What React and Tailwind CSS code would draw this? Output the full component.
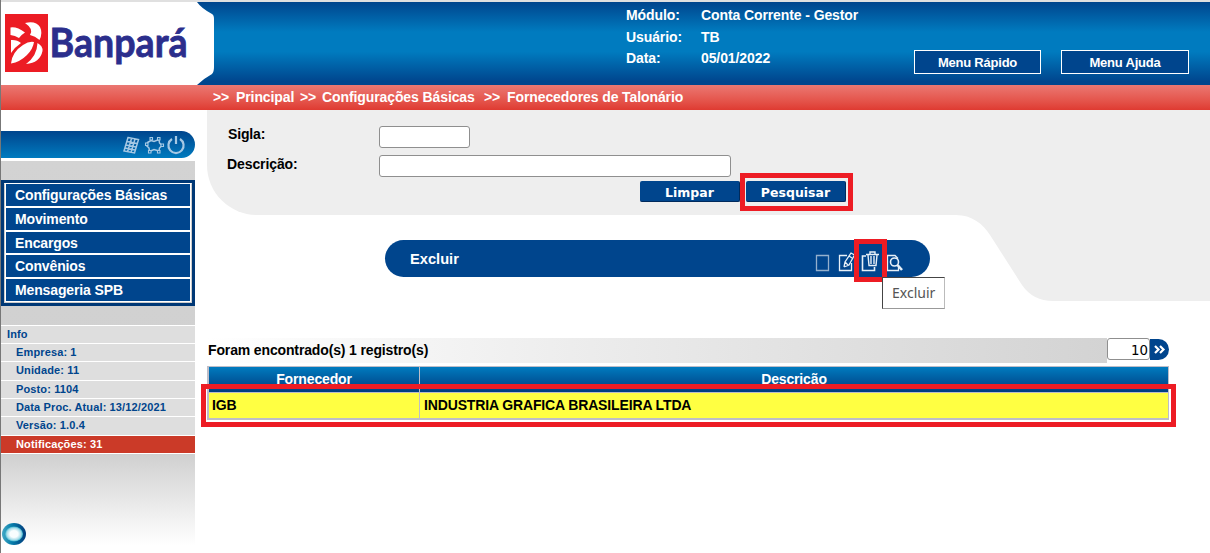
import React from "react";

function Logo() {
  return (
    <svg className="block h-[83px] w-[214px] shrink-0 overflow-visible" viewBox="0 0 214 83">
      <path d="M0 0H196Q200 6 211 12Q213 13 213 17V65Q213 70 211 72Q202 77 196 83H0Z" fill="#fff" />
      <rect x="4" y="12" width="43" height="58" fill="#ec1c24" />
      <path d="M9.500 25.500Q16 24.500 24 30.500Q20 33 18 36Q14 33.500 9.500 33Z" fill="#fff" />
      <path d="M24 21Q35 18.500 39 25Q42 31 38.500 38Q34 34 29 33Q33 27 24 21Z" fill="#fff" />
      <path d="M10 38Q16 37.500 20 41Q14 45 10 51Z" fill="#fff" />
      <path d="M10 61.500Q11 50 22 43Q28 39 33 40Q32 47 26 53Q19 60 10 61.500Z" fill="#fff" />
      <path d="M25 62Q36 54 36.500 41Q42 44 41.500 49Q39 61 25 62Z" fill="#fff" />
      <text x="48.500" y="54.500" fontFamily="Lato, sans-serif" fontWeight="700" fontSize="40" fill="#2b2e8c" stroke="#2b2e8c" strokeWidth=".8" textLength="138" lengthAdjust="spacingAndGlyphs">
        Banpará
      </text>
    </svg>
  );
}

function Header() {
  const rows = [
    ["Módulo:", "Conta Corrente - Gestor"],
    ["Usuário:", "TB"],
    ["Data:", "05/01/2022"],
  ];
  return (
    <header className="flex h-[85px] border-t-2 border-[#e0e0e0] bg-[linear-gradient(#00458d,#007bbf_36%,#007bbf_60%,#00458d_96%)] text-white">
      <Logo />
      <div className="ml-[411px] flex w-[288px] flex-col pt-[3px] text-[14px] leading-[21.5px] tracking-[-0.1px]">
        {rows.map(([k, v]) => (
          <div key={k} className="flex">
            <span className="w-[75px]">{k}</span>
            <span className="whitespace-nowrap">{v}</span>
          </div>
        ))}
      </div>
      <div className="flex gap-5 pt-12">
        <button className="h-6 w-[127px] border border-white bg-[#00458d] text-[13px] leading-[21px] tracking-[-0.22px]">Menu Rápido</button>
        <button className="h-6 w-32 border border-white bg-[#00458d] text-[13px] leading-[21px] tracking-[-0.22px]">Menu Ajuda</button>
      </div>
    </header>
  );
}

function Sidebar() {
  const menu = ["Configurações Básicas", "Movimento", "Encargos", "Convênios", "Mensageria SPB"];
  const info = ["Empresa: 1", "Unidade: 11", "Posto: 1104", "Data Proc. Atual: 13/12/2021", "Versão: 1.0.4"];
  return (
    <aside className="w-[194px] shrink-0 pt-[21px]">
      <div className="mb-[3px] flex h-[27px] justify-end rounded-r-full bg-linear-to-b from-[#00458d] to-[#007bbf]">
        <svg className="h-[27px] w-[72px]" viewBox="0 0 72 27" fill="none" stroke="#a5c8e4">
          <path d="M5 6.500L15.500 8.500L11.500 22L1 20ZM8.500 7.500L4.500 21M12 8L8 21.500M4 10.500L14 12.500M3 14L13 16M2 17L12 19" strokeWidth="1.500" />
          <path d="M24.500 11.500L28 9.500L31 10.500L36 8.500L36.500 12L39 14.500L36.500 17L36 20L31 18.500L26.500 20.500L26 17L23.500 14.500Z" strokeWidth="1.500" />
          <path d="M27 6.500h2.500v2.500h-2.500zM34.500 6.500h2.500v2.500h-2.500zM38 13h2.500v2.500h-2.500zM34.500 19.500h2.500v2.500h-2.500zM25.500 19.500h2.500v2.500h-2.500zM22.500 12h2.500v2.500h-2.500z" fill="#0067ae" strokeWidth="1.100" />
          <path d="M49 8A7.600 7.600 0 1 0 57 8M53 5V13" strokeWidth="2.200" />
        </svg>
      </div>
      <div className="h-[384px] bg-[linear-gradient(#d3d3d3,#cfcfcf_76%,#fff)] pt-[19px]">
        <nav className="h-[126px] bg-[#003876] px-[3px] pt-[3px]">
          <div className="flex h-[120px] flex-col gap-[2px] border border-r-[#ccc] border-b-[#ccc] border-t-white border-l-[#ccc] bg-white px-px pb-px text-[14px] leading-[22px] text-white">
            {menu.map((m) => (
              <div key={m} className="min-h-0 flex-1 bg-[#00458d] pl-[9px] tracking-[-0.13px]">{m}</div>
            ))}
          </div>
        </nav>
        <div className="mt-[19px] flex h-[129px] flex-col gap-px bg-white py-px text-[11px] leading-[16.5px] tracking-[0.13px] text-[#00458d]">
          <div className="h-[17px] shrink-0 bg-[#dedede] pl-[6px] leading-[17px]">Info</div>
          {info.map((t) => (
            <div key={t} className="min-h-0 flex-1 bg-[#dedede] pl-[15px]">{t}</div>
          ))}
          <div className="min-h-0 flex-1 bg-[#cb3a28] pl-[15px] text-white">Notificações: 31</div>
        </div>
        <svg className="mt-[68px] block h-6 w-[26px]" viewBox="0 0 26 24">
          <defs>
            <linearGradient id="ring" x1="0" x2="1"><stop stopColor="#43a9c6" /><stop offset=".4" stopColor="#087eab" /><stop offset="1" stopColor="#003b7b" /></linearGradient>
            <radialGradient id="glow"><stop offset=".45" stopColor="#f8fdfe" /><stop offset=".8" stopColor="#a5dce9" /><stop offset="1" stopColor="#38b2cb" /></radialGradient>
          </defs>
          <ellipse cx="13" cy="12" rx="12" ry="11" fill="url(#ring)" />
          <ellipse cx="13" cy="12" rx="9" ry="7.500" fill="url(#glow)" />
        </svg>
      </div>
    </aside>
  );
}

function SearchForm() {
  return (
    <section className="h-[105px] rounded-bl-[50px] bg-[#eee] text-[14px]">
      <div className="flex h-[45px] pt-4 pl-[21px]">
        <label className="w-[151px] leading-[16px] tracking-[-0.15px]">Sigla:</label>
        <input className="h-[22px] w-[91px] rounded-[3px] border border-[#8f8f8f] bg-white" />
      </div>
      <div className="flex h-[26px] pl-[20px]">
        <label className="w-[152px] leading-[18px] tracking-[-0.1px]">Descrição:</label>
        <input className="h-[22px] w-[352px] rounded-[3px] border border-[#8f8f8f] bg-white" />
      </div>
      <div className="flex gap-[6px] pl-[433px] font-['DejaVu_Sans',sans-serif] text-[12.5px] text-white">
        <button className="h-[21px] w-[100px] rounded-[2px] border-r border-b border-[#002a5c] bg-[#00458d] pt-px leading-[22px]">Limpar</button>
        <div className="relative">
          <button className="block h-[21px] w-[100px] rounded-[2px] border-r border-b border-[#002a5c] bg-[#00458d] pt-px leading-[22px]">Pesquisar</button>
          <div className="absolute -top-2 -left-[6px] h-[38px] w-[113px] border-[5px] border-[#ed1c24]" />
        </div>
      </div>
    </section>
  );
}

function ActionBar() {
  return (
    <section className="relative h-[123px] pt-[25px] pl-[178px]">
      <svg className="absolute top-0 right-0 h-[86px] w-[270px]" viewBox="0 0 270 86">
        <path d="M0 0H16C32 0 43 9 50 20L82 70Q93 86 113 86H270V0Z" fill="#eee" />
      </svg>
      <div className="relative flex h-[37px] w-[545px] justify-between rounded-full bg-[#00458d] pr-6 pl-[25px] text-[14.67px] leading-[38px] text-white">
        <span>Excluir</span>
        <svg className="mt-[9px] h-6 w-[92px]" viewBox="0 0 92 24" fill="none" stroke="#e7f0f8" strokeWidth="1.300">
          <path d="M2.500 6.500h12v15h-12z" stroke="#94b0cd" />
          <path d="M33 6.500H25.500V21.500H37.500V14M30 18L31 13L37 4L40.500 6L35 16L30 18M35 7L38 9M31 13L34 16" />
          <path d="M52 7H48.500V21.500H60.500V18" strokeWidth="1.600" />
          <path d="M52 5.500H65M56 5V3H61V5M54 6L55 16.500H62L63 6M57 7V15M60 7V15" strokeWidth="1.400" />
          <path d="M78 21.500H73.500V6.500H81L84 9.500M76 21.500H84.500V18" />
          <circle cx="80.500" cy="13" r="4" strokeWidth="1.600" />
          <path d="M83.500 16L88 21" strokeWidth="2.600" />
        </svg>
        <div className="absolute -top-px left-[469px] h-[43px] w-[33px] border-[5px] border-[#ed1c24]" />
        <div className="absolute top-[37px] left-[497px] h-8 w-[63px] border border-t-[#444] border-r-[#bbb] border-b-[#999] border-l-[#444] bg-white pl-[9px] font-['Noto_Sans',sans-serif] text-[14px] leading-[30px] font-normal text-[#555]">Excluir</div>
      </div>
    </section>
  );
}

function Results() {
  return (
    <section className="w-[962px] text-[14px] tracking-[-0.14px]">
      <div className="mb-[3px] flex h-[25px]">
        <div className="w-[900px] bg-linear-to-r from-white to-[#d3d3d3] pl-px leading-[25px]">Foram encontrado(s) 1 registro(s)</div>
        <div className="flex h-[22px] w-[43px] items-center justify-end rounded-[3px] border border-[#8f8f8f] bg-white pt-[3px] pr-px font-['DejaVu_Sans',sans-serif] text-[13.333px] font-normal tracking-normal">10</div>
        <button className="mt-px h-[21px] w-[19px] rounded-r-full bg-[#00458d]">
          <svg className="h-[21px] w-[19px]" viewBox="0 0 19 21" fill="none" stroke="#fff" strokeWidth="2.200"><path d="M5 7L8.500 10.500L5 14M10 7L13.500 10.500L10 14" /></svg>
        </button>
      </div>
      <div className="relative">
        <div className="grid h-[54px] grid-cols-[210px_1fr] grid-rows-[25px_25px] gap-px border border-b-2 border-l-2 border-[#bdbdc8] bg-[#bdbdc8]">
          <div className="bg-linear-to-b from-[#007bbf] to-[#003d80] text-center leading-[25px] text-white">Fornecedor</div>
          <div className="bg-linear-to-b from-[#007bbf] to-[#003d80] text-center leading-[25px] text-white">Descrição</div>
          <div className="bg-[#ffff42] pl-[3px] leading-[25px]">IGB</div>
          <div className="bg-[#ffff42] pl-1 leading-[25px]">INDUSTRIA GRAFICA BRASILEIRA LTDA</div>
        </div>
        <div className="absolute top-[18px] -left-[6px] h-[43px] w-[975px] border-[5px] border-[#ed1c24]" />
      </div>
    </section>
  );
}

export default function App() {
  return (
    <div className="h-[553px] w-[1210px] overflow-hidden border-l border-[#777] bg-white font-['Liberation_Sans',Arial,sans-serif] font-bold text-black">
      <Header />
      <div className="flex h-[25px] bg-linear-to-b from-[#eb7772] to-[#df3a31] pl-[212px] text-[14px] leading-[25px] tracking-[-0.1px] whitespace-nowrap text-white">
        <span className="w-[23px]">&gt;&gt;</span>
        <span className="w-[64px]">Principal</span>
        <span className="w-[22px]">&gt;&gt;</span>
        <span className="w-[162px]">Configurações Básicas</span>
        <span className="w-[23px]">&gt;&gt;</span>
        <span>Fornecedores de Talonário</span>
      </div>
      <div className="flex">
        <Sidebar />
        <main className="ml-3 flex-1">
          <SearchForm />
          <ActionBar />
          <Results />
        </main>
      </div>
    </div>
  );
}
